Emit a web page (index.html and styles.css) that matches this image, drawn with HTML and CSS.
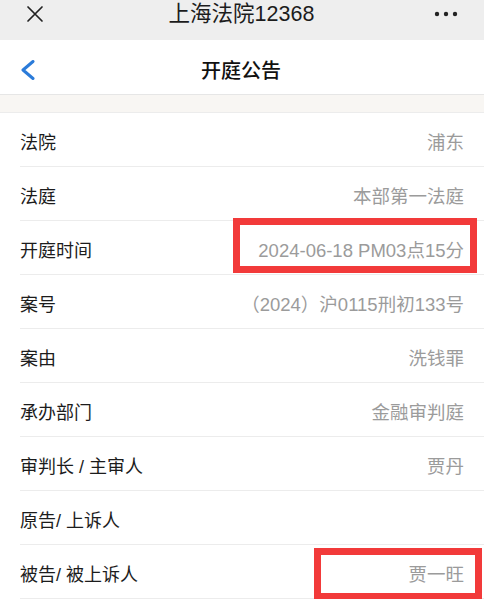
FILE: index.html
```html
<!DOCTYPE html>
<html lang="zh-CN">
<head>
<meta charset="utf-8">
<title>开庭公告</title>
<link rel="stylesheet" href="styles.css">
</head>
<body>
<div class="page">
  <header class="topbar">
    <svg class="close" width="18" height="18" viewBox="0 0 18 18"><path d="M2 2 L16 16 M16 2 L2 16" stroke="#222" stroke-width="1.7" fill="none" stroke-linecap="round"/></svg>
    <div class="app-title">上海法院12368</div>
    <svg class="more" width="24" height="6" viewBox="0 0 24 6"><circle cx="3" cy="3" r="2.2" fill="#222"/><circle cx="12" cy="3" r="2.2" fill="#222"/><circle cx="21" cy="3" r="2.2" fill="#222"/></svg>
  </header>
  <nav class="navbar">
    <svg class="back" width="16" height="20" viewBox="0 0 16 20"><path d="M13 1.5 L3 10 L13 18.5" stroke="#2b7bd9" stroke-width="3" fill="none" stroke-linecap="round" stroke-linejoin="round"/></svg>
    <div class="page-title">开庭公告</div>
  </nav>
  <div class="band"></div>
  <ul class="list">
    <li class="row"><span class="label">法院</span><span class="value">浦东</span></li>
    <li class="row"><span class="label">法庭</span><span class="value">本部第一法庭</span></li>
    <li class="row"><span class="label">开庭时间</span><span class="value">2024-06-18 PM03点15分</span><span class="mark mark-time"></span></li>
    <li class="row"><span class="label">案号</span><span class="value">（2024）沪0115刑初133号</span></li>
    <li class="row"><span class="label">案由</span><span class="value">洗钱罪</span></li>
    <li class="row"><span class="label">承办部门</span><span class="value">金融审判庭</span></li>
    <li class="row"><span class="label">审判长 / 主审人</span><span class="value">贾丹</span></li>
    <li class="row"><span class="label">原告/ 上诉人</span><span class="value"></span></li>
    <li class="row"><span class="label">被告/ 被上诉人</span><span class="value">贾一旺</span><span class="mark mark-name"></span></li>
  </ul>
</div>
</body>
</html>
```

FILE: styles.css
```css
* { box-sizing: border-box; }
html, body { margin: 0; padding: 0; background: #ffffff; }
body {
  font-family: "Liberation Sans", "Noto Sans CJK SC", sans-serif;
  color: #1c1c1c;
}
.page {
  width: 484px;
  background: #ffffff;
}
.topbar {
  height: 40px;
  background: #eeeeee;
  display: flex;
  align-items: center;
  justify-content: space-between;
  padding: 0 26px 12px 26px;
  position: relative;
}
.close { display: block; }
.app-title {
  position: absolute;
  left: 0; right: 0; top: 0;
  height: 28px;
  line-height: 28px;
  text-align: center;
  font-size: 21.5px;
  color: #1c1c1c;
  padding-right: 1px;
}
.more { display: block; }
.navbar {
  height: 55px;
  background: #ffffff;
  border-bottom: 1px solid #e6e6e6;
  display: flex;
  align-items: center;
  padding: 5px 0 0 20px;
  position: relative;
}
.back { display: block; }
.page-title {
  position: absolute;
  left: 0; right: 0; top: 5px; bottom: 0;
  display: flex;
  align-items: center;
  justify-content: center;
  font-family: "Noto Sans CJK SC", sans-serif;
  font-size: 20px;
  font-weight: 500;
  color: #111;
  padding-right: 2px;
}
.band {
  height: 18px;
  background: #f8f6f3;
  border-bottom: 1px solid #ececec;
}
.list {
  list-style: none;
  margin: 0 0 0 20px;
  padding: 0;
}
.row {
  height: 54px;
  border-bottom: 1px solid #ececec;
  display: flex;
  align-items: center;
  justify-content: space-between;
  padding: 3px 20px 0 0;
  position: relative;
  font-size: 18px;
}
.label { color: #1c1c1c; }
.value { color: #9b9b9b; font-size: 18.5px; }
.mark {
  position: absolute;
  border: 7px solid #f23a3a;
}
.mark-time {
  top: -3px;
  right: 7px;
  width: 244px;
  height: 55px;
}
.mark-name {
  top: 3px;
  right: 2px;
  width: 168px;
  height: 52px;
}
```
